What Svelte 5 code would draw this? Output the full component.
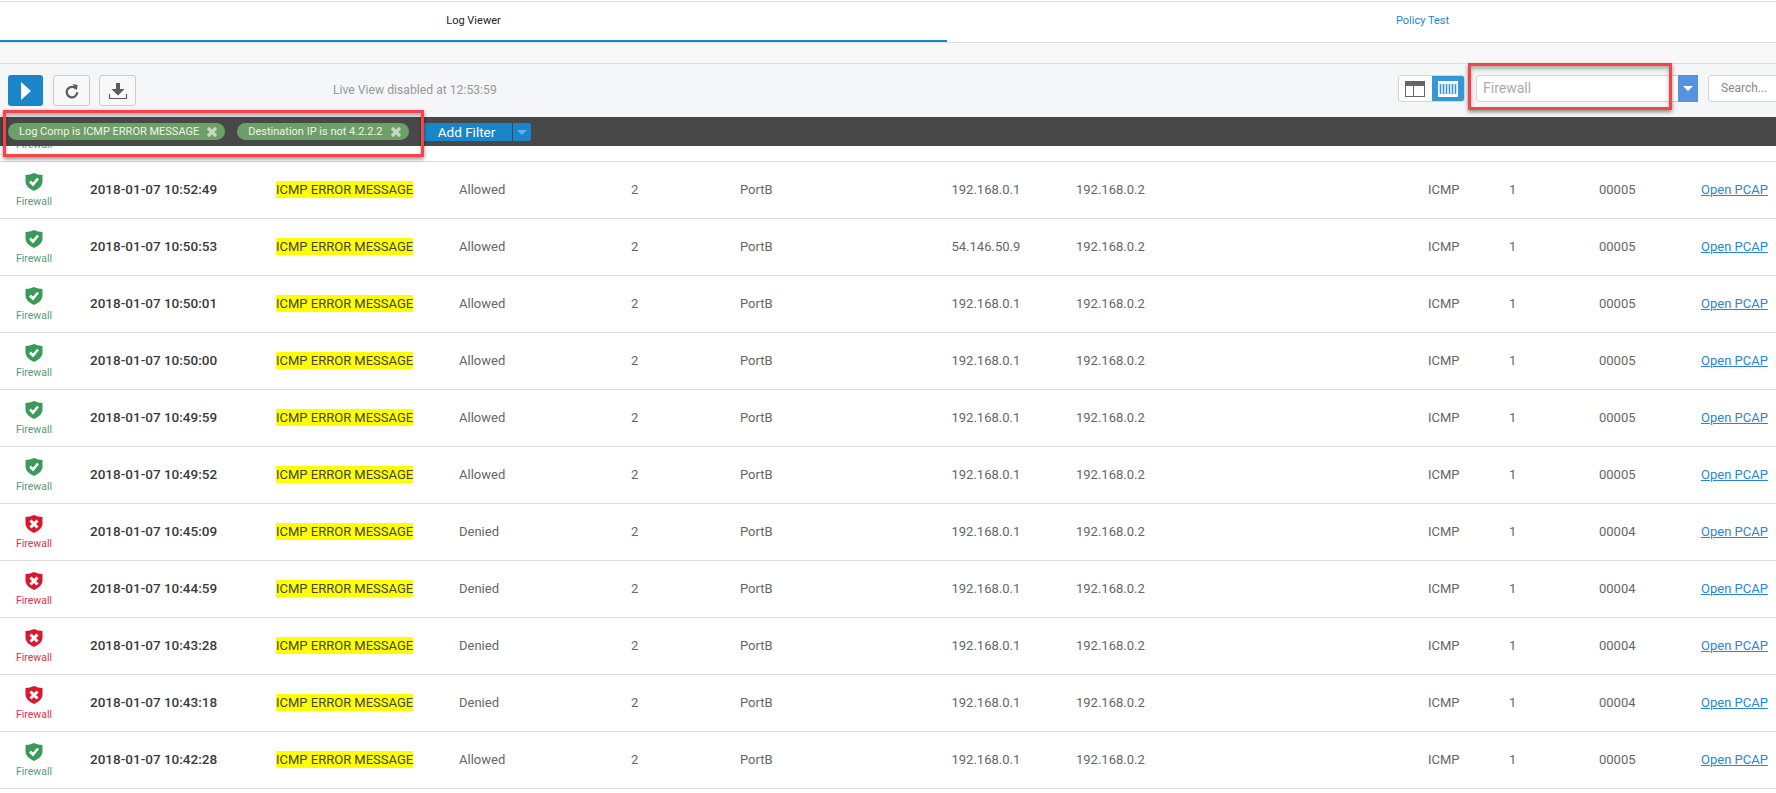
<script>
    const rows = [
        { time: "2018-01-07 10:52:49", ok: true, src: "192.168.0.1", id: "00005" },
        { time: "2018-01-07 10:50:53", ok: true, src: "54.146.50.9", id: "00005" },
        { time: "2018-01-07 10:50:01", ok: true, src: "192.168.0.1", id: "00005" },
        { time: "2018-01-07 10:50:00", ok: true, src: "192.168.0.1", id: "00005" },
        { time: "2018-01-07 10:49:59", ok: true, src: "192.168.0.1", id: "00005" },
        { time: "2018-01-07 10:49:52", ok: true, src: "192.168.0.1", id: "00005" },
        { time: "2018-01-07 10:45:09", ok: false, src: "192.168.0.1", id: "00004" },
        { time: "2018-01-07 10:44:59", ok: false, src: "192.168.0.1", id: "00004" },
        { time: "2018-01-07 10:43:28", ok: false, src: "192.168.0.1", id: "00004" },
        { time: "2018-01-07 10:43:18", ok: false, src: "192.168.0.1", id: "00004" },
        { time: "2018-01-07 10:42:28", ok: true, src: "192.168.0.1", id: "00005" },
    ];

    const filters = ["Log Comp is ICMP ERROR MESSAGE", "Destination IP is not 4.2.2.2"];
</script>

<div class="page">
    <div class="tabs">
        <div class="tab active">Log Viewer</div>
        <div class="tab">Policy Test</div>
    </div>
    <div class="subbar"></div>

    <div class="toolbar">
        <button class="tool play" aria-label="Play">
            <svg width="12" height="18" viewBox="0 0 12 18"><path d="M1 0 L11 9 L1 18 Z" fill="#fff" /></svg>
        </button>
        <button class="tool" aria-label="Refresh">
            <svg width="14" height="16" viewBox="0 0 16 18">
                <path d="M12.6 6.4 A6 6 0 1 0 14 10.5" fill="none" stroke="#5c5c5c" stroke-width="2.6" />
                <path d="M8.5 1 L14.5 2 L13.5 8 Z" fill="#5c5c5c" />
            </svg>
        </button>
        <button class="tool" aria-label="Download">
            <svg width="20" height="20" viewBox="0 0 20 20">
                <path d="M8 2 H12 V8 H16.5 L10 14.5 L3.5 8 H8 Z" fill="#5c5c5c" />
                <path d="M1.5 13 V17.5 H18.5 V13" fill="none" stroke="#5c5c5c" stroke-width="1.2" />
            </svg>
        </button>
        <span class="live">Live View disabled at 12:53:59</span>

        <div class="toggle">
            <span class="mode" aria-label="Panes">
                <svg width="20" height="16" viewBox="0 0 20 16">
                    <rect x="0.5" y="0.5" width="19" height="15" fill="#fff" stroke="#666" />
                    <rect x="0" y="0" width="20" height="5" fill="#666" />
                    <path d="M8.5 5 V15" stroke="#666" />
                </svg>
            </span>
            <span class="mode on" aria-label="Columns">
                <svg width="20" height="16" viewBox="0 0 20 16">
                    <rect width="20" height="16" fill="#fff" />
                    <path d="M2.5 3 V13 M5.5 3 V13 M8.5 3 V13 M11.5 3 V13 M14.5 3 V13 M17.5 3 V13" stroke="#3497d6" stroke-width="1.6" />
                </svg>
            </span>
        </div>

        <div class="select">
            <span class="value">Firewall</span>
            <span class="arrow"><i></i></span>
        </div>
        <div class="search">Search...</div>
    </div>

    <div class="filterbar">
        {#each filters as f}
            <span class="pill">
                {f}
                <svg width="12" height="12" viewBox="0 0 12 12">
                    <path d="M2 2 L10 10 M10 2 L2 10" stroke="#c9d8c4" stroke-width="3.2" />
                </svg>
            </span>
        {/each}
        <div class="addfilter">
            <span class="add">Add Filter</span>
            <span class="more"><i></i></span>
        </div>
    </div>

    <div class="list">
        <!-- row scrolled under the filter bar, only its label peeks out -->
        <div class="row">
            <div class="status">
                <span class="spacer"></span>
                <span>Firewall</span>
            </div>
        </div>
        {#each rows as r}
            <div class="row">
                <div class="status" class:denied={!r.ok}>
                    <svg width="18" height="18" viewBox="0 0 18 18">
                        <path d="M0.5 2 Q5 2 9 0 Q13 2 17.5 2 V9 Q17.5 14 9 18 Q0.5 14 0.5 9 Z" fill={r.ok ? "#3a9a5a" : "#d9182d"} />
                        {#if r.ok}
                            <path d="M5 8.5 L8 11.5 L13 5.5" fill="none" stroke="#fff" stroke-width="2.6" />
                        {:else}
                            <path d="M5.5 5.5 L12.5 12.5 M12.5 5.5 L5.5 12.5" stroke="#fff" stroke-width="3" />
                        {/if}
                    </svg>
                    <span>Firewall</span>
                </div>
                <div class="time">{r.time}</div>
                <div><mark>ICMP ERROR MESSAGE</mark></div>
                <div>{r.ok ? "Allowed" : "Denied"}</div>
                <div>2</div>
                <div>PortB</div>
                <div>{r.src}</div>
                <div>192.168.0.2</div>
                <div>ICMP</div>
                <div>1</div>
                <div>{r.id}</div>
                <div><a href="#pcap">Open PCAP</a></div>
            </div>
        {/each}
    </div>

    <!-- annotation boxes from the screenshot -->
    <div class="callout one"></div>
    <div class="callout two"></div>
</div>

<style>
    :global(body) {
        margin: 0;
        background: #fff;
    }

    .page {
        position: relative;
        width: 1776px;
        height: 793px;
        overflow: hidden;
        font-family: Roboto, "Liberation Sans", sans-serif;
        font-size: 13px;
        color: #666;
        background: #fff;
    }

    .tabs {
        display: grid;
        grid-template-columns: 947px 947px;
        height: 42px;
        margin-top: 1px;
        box-sizing: border-box;
        border-top: 1px solid #e2e2e2;
        border-bottom: 1px solid #ddd;
    }

    .tab {
        padding-left: 4px;
        text-align: center;
        font-size: 11px;
        line-height: 38px;
        color: #1a85c8;
    }

    .tab.active {
        padding-left: 0;
        color: #222;
        height: 40px;
        box-sizing: border-box;
        border-bottom: 2px solid #1a85c8;
    }

    .subbar {
        height: 20px;
        background: #f8f8f9;
        border-bottom: 1px solid #ddd;
    }

    .toolbar {
        display: flex;
        align-items: flex-start;
        height: 53px;
        box-sizing: border-box;
        padding-top: 11px;
        padding-left: 8px;
        background: #f5f6f8;
    }

    .tool {
        display: flex;
        align-items: center;
        justify-content: center;
        flex: none;
        width: 37px;
        height: 31px;
        margin-right: 9px;
        padding: 0;
        box-sizing: border-box;
        background: #f8f8f8;
        border: 1px solid #ccc;
        border-radius: 3px;
    }

    .tool.play {
        width: 35px;
        margin-right: 10px;
        background: #1a85c8;
        border: none;
    }

    .live {
        flex: none;
        width: 1065px;
        margin-left: 188px;
        padding-top: 1px;
        line-height: 28px;
        font-size: 12.2px;
        color: #999;
        white-space: nowrap;
    }

    .toggle {
        display: flex;
        flex: none;
        width: 67px;
        height: 27px;
        box-sizing: border-box;
        background: #fff;
        border: 1px solid #d5d5d5;
        border-radius: 3px;
        overflow: hidden;
    }

    .mode {
        flex: 1;
        display: flex;
        align-items: center;
        justify-content: center;
    }

    .mode.on {
        background: #3497d6;
    }

    .select {
        display: flex;
        flex: none;
        width: 222px;
        height: 27px;
        margin-left: 11px;
        box-sizing: border-box;
        background: #fff;
        border: 1px solid #d5d5d5;
        border-radius: 3px;
    }

    .value {
        flex: 1;
        padding-left: 6px;
        line-height: 25px;
        font-size: 14px;
        color: #aaa;
    }

    .arrow {
        display: flex;
        align-items: center;
        justify-content: center;
        width: 20px;
        margin: -1px;
        background: #5592e0;
    }

    .arrow i {
        border: 5px solid transparent;
        border-top: 5px solid #fff;
        border-bottom: 0;
    }

    .search {
        width: 90px;
        height: 27px;
        margin-left: 10px;
        flex: none;
        padding-left: 12px;
        box-sizing: border-box;
        line-height: 25px;
        font-size: 12px;
        color: #888;
        background: #fff;
        border: 1px solid #d5d5d5;
        border-radius: 3px;
    }

    .filterbar {
        position: relative;
        z-index: 1;
        display: flex;
        align-items: flex-start;
        gap: 12px;
        height: 29px;
        box-sizing: border-box;
        padding: 6px 0 0 8px;
        background: #484848;
    }

    .pill {
        display: flex;
        align-items: center;
        gap: 7px;
        height: 17px;
        padding: 0 7px 0 11px;
        font-size: 11px;
        color: #eef3ea;
        background: #6f9f68;
        border-radius: 9px;
        white-space: nowrap;
    }

    .addfilter {
        display: flex;
        height: 18px;
        margin-left: 1px;
        color: #fff;
        font-size: 13.5px;
        line-height: 18px;
    }

    .add {
        width: 90px;
        text-align: center;
        background: #1a85c8;
        border-radius: 2px 0 0 2px;
    }

    .more {
        display: flex;
        align-items: center;
        justify-content: center;
        width: 18px;
        margin-left: 1px;
        background: #1a85c8;
        border-radius: 0 2px 2px 0;
    }

    .more i {
        border: 5px solid transparent;
        border-top: 5px solid #6aaee6;
        border-bottom: 0;
    }

    .list {
        margin-top: -41px;
    }

    .row {
        display: grid;
        grid-template-columns: 90px 186px 183px 172px 109px 211.5px 124.5px 352px 81px 90px 102px 75px;
        align-items: center;
        height: 57px;
        box-sizing: border-box;
        padding-bottom: 2px;
        border-bottom: 1px solid #ddd;
        white-space: nowrap;
    }

    .status {
        display: flex;
        flex-direction: column;
        align-items: center;
        width: 68px;
        padding-top: 3px;
        font-size: 10.5px;
        line-height: 13px;
        color: #579a78;
    }

    .spacer {
        height: 18px;
    }

    .status span:not(.spacer) {
        margin-top: 4px;
    }

    .status.denied {
        color: #e0324a;
    }

    .time {
        font-size: 13.5px;
        font-weight: 500;
        color: #3a3a3a;
    }

    mark {
        display: inline-block;
        height: 17px;
        line-height: 17px;
        background: #ff0;
        color: #444;
    }

    a {
        color: #2a86d0;
    }

    .callout {
        position: absolute;
        z-index: 2;
        box-sizing: border-box;
        border: 3px solid #f44349;
        box-shadow:
            0 2px 4px rgba(0, 0, 0, 0.45),
            inset 0 3px 4px rgba(0, 0, 0, 0.3);
        pointer-events: none;
    }

    .callout.one {
        left: 3px;
        top: 110px;
        width: 421px;
        height: 47px;
    }

    .callout.two {
        left: 1468px;
        top: 63px;
        width: 204px;
        height: 47px;
    }
</style>
